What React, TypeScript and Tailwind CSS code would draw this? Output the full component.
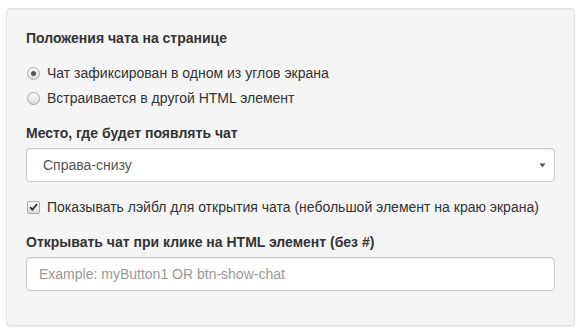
const font = { fontFamily: '"Liberation Sans", Arial, sans-serif' };

const Radio = ({ checked, label }: { checked?: boolean; label: string }) => (
  <label className="flex h-5 items-center leading-5">
    <span className="ml-[1px] mr-[7px] flex h-[13px] w-[13px] items-center justify-center rounded-full border border-[#a9a9a9] bg-gradient-to-b from-[#fdfdfd] to-[#dcdcdc]">
      {checked && <span className="h-[5px] w-[5px] rounded-full bg-[#555]" />}
    </span>
    <span>{label}</span>
  </label>
);

export default function App() {
  return (
    <div className="min-h-[330px] bg-white pl-[6px] pr-[4px] pt-[8px] text-[14px] text-[#333]" style={font}>
      <div className="flex flex-col rounded-[4px] border border-[#e3e3e3] bg-[#f5f5f5] px-[19px] pb-[19px] pt-[19px] shadow-[inset_0_1px_1px_rgba(0,0,0,0.05),0_1px_1px_rgba(0,0,0,0.08)]">
        {/* position */}
        <div className="mb-[15px] flex flex-col">
          <div className="mb-[15px] font-bold leading-5">Положения чата на странице</div>
          <div className="flex flex-col gap-[5px]">
            <Radio checked label="Чат зафиксирован в одном из углов экрана" />
            <Radio label="Встраивается в другой HTML элемент" />
          </div>
        </div>

        {/* corner */}
        <div className="mb-[15px] flex flex-col">
          <div className="mb-[5px] font-bold leading-5">Место, где будет появлять чат</div>
          <div className="flex h-[34px] items-center justify-between rounded-[4px] border border-[#ccc] bg-white pl-[16px] pr-[8px] text-[#555] shadow-[inset_0_1px_1px_rgba(0,0,0,0.075)]">
            <span>Справа-снизу</span>
            <svg width="7" height="5" viewBox="0 0 7 5" className="mt-[1px]">
              <path d="M0.5 0.5 H6.5 L3.5 4.5 Z" fill="#555" />
            </svg>
          </div>
        </div>

        {/* label toggle */}
        <div className="mb-[15px] flex h-5 items-center leading-5">
          <span className="ml-[1px] mr-[7px] flex h-[13px] w-[13px] items-center justify-center rounded-[2px] border border-[#a9a9a9] bg-gradient-to-b from-[#fdfdfd] to-[#dcdcdc]">
            <svg width="9" height="8" viewBox="0 0 9 8">
              <path d="M1 4.2 L3.4 6.6 L8 1.2" stroke="#333" strokeWidth="1.8" fill="none" />
            </svg>
          </span>
          <span>Показывать лэйбл для открытия чата (небольшой элемент на краю экрана)</span>
        </div>

        {/* click element */}
        <div className="mb-[15px] flex flex-col">
          <div className="mb-[5px] font-bold leading-5">Открывать чат при клике на HTML элемент (без #)</div>
          <input
            placeholder="Example: myButton1 OR btn-show-chat"
            className="block h-[34px] w-full rounded-[4px] border border-[#ccc] bg-white px-[12px] text-[#555] shadow-[inset_0_1px_1px_rgba(0,0,0,0.075)] outline-none placeholder:text-[#999]"
            style={font}
          />
        </div>
      </div>
    </div>
  );
}
